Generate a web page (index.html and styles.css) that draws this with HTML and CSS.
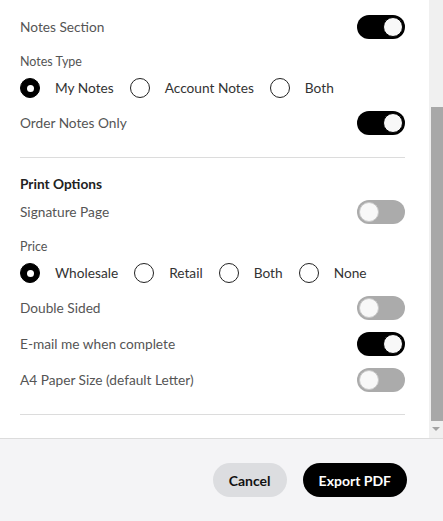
FILE: index.html
```html
<!DOCTYPE html>
<html lang="en">
<head>
    <meta charset="UTF-8">
    <meta name="viewport" content="width=device-width, initial-scale=1.0">
    <title>Export PDF</title>
    <link rel="stylesheet" href="styles.css">
</head>
<body>
    <div class="modal">
        <div class="modal-body">
            <div class="content">
                <div class="row">
                    <span class="row-label">Notes Section</span>
                    <span class="toggle on"><span class="knob"></span></span>
                </div>

                <div class="field-label">Notes Type</div>
                <div class="radio-group">
                    <span class="radio checked"></span><span class="radio-label">My Notes</span>
                    <span class="radio"></span><span class="radio-label">Account Notes</span>
                    <span class="radio"></span><span class="radio-label">Both</span>
                </div>

                <div class="row">
                    <span class="row-label">Order Notes Only</span>
                    <span class="toggle on"><span class="knob"></span></span>
                </div>

                <hr class="divider">

                <h3 class="section-title">Print Options</h3>
                <div class="row">
                    <span class="row-label">Signature Page</span>
                    <span class="toggle"><span class="knob"></span></span>
                </div>

                <div class="field-label">Price</div>
                <div class="radio-group">
                    <span class="radio checked"></span><span class="radio-label">Wholesale</span>
                    <span class="radio"></span><span class="radio-label">Retail</span>
                    <span class="radio"></span><span class="radio-label">Both</span>
                    <span class="radio"></span><span class="radio-label">None</span>
                </div>

                <div class="row">
                    <span class="row-label">Double Sided</span>
                    <span class="toggle"><span class="knob"></span></span>
                </div>
                <div class="row">
                    <span class="row-label">E-mail me when complete</span>
                    <span class="toggle on"><span class="knob"></span></span>
                </div>
                <div class="row">
                    <span class="row-label">A4 Paper Size (default Letter)</span>
                    <span class="toggle"><span class="knob"></span></span>
                </div>

                <hr class="divider">
            </div>
            <div class="scrollbar">
                <div class="track"><div class="thumb"></div></div>
                <div class="scroll-btn"><span class="arrow-down"></span></div>
            </div>
        </div>
        <div class="modal-footer">
            <button class="btn btn-cancel">Cancel</button>
            <button class="btn btn-primary">Export PDF</button>
        </div>
    </div>
</body>
</html>
```

FILE: styles.css
```css
* {
    margin: 0;
    padding: 0;
    box-sizing: border-box;
}

body {
    font-family: 'Segoe UI', Lato, sans-serif;
    background: #ffffff;
    color: #222;
    font-size: 13.7px;
}

.modal {
    display: flex;
    flex-direction: column;
    height: 521px;
}

.modal-body {
    display: flex;
    height: 439px;
    border-bottom: 1px solid #dcdcdc;
}

.content {
    flex: 1;
    padding: 9px 24px 0 20px;
}

.row {
    height: 36px;
    display: flex;
    justify-content: space-between;
    align-items: center;
}

.row-label {
    color: #555;
    padding-bottom: 2px;
}

.field-label {
    margin-top: 8px;
    margin-bottom: 5px;
    line-height: 18px;
    font-size: 12.5px;
    color: #555;
}

.radio-group {
    display: flex;
    align-items: center;
    height: 24px;
    margin-bottom: 5px;
}

.radio {
    width: 20px;
    height: 20px;
    border-radius: 50%;
    border: 1px solid #222;
    background: #fff;
    flex-shrink: 0;
}

.radio.checked {
    background: #000;
    border-color: #000;
    display: flex;
    justify-content: center;
    align-items: center;
}

.radio.checked::after {
    content: '';
    width: 7px;
    height: 7px;
    border-radius: 50%;
    background: #fff;
}

.radio-label {
    margin-left: 15px;
    margin-right: 16px;
    color: #333;
    padding-bottom: 2px;
}

.toggle {
    width: 48px;
    height: 24px;
    border-radius: 12px;
    background: #ababab;
    display: flex;
    align-items: center;
    padding: 2px;
}

.toggle .knob {
    width: 20px;
    height: 20px;
    border-radius: 50%;
    background: #f8f8f8;
    border: 1px solid #c8c8c8;
}

.toggle.on {
    background: #000;
    justify-content: flex-end;
}

.toggle.on .knob {
    border-color: #000;
}

.divider {
    border: none;
    border-top: 1px solid #dcdcdc;
    margin-top: 16px;
}

.section-title {
    margin-top: 16px;
    line-height: 20px;
    font-size: 13.7px;
    font-weight: 700;
    color: #222;
}

.scrollbar {
    width: 14px;
    display: flex;
    flex-direction: column;
    background: #f0f0f0;
}

.track {
    flex: 1;
    padding-top: 107px;
    padding-left: 2px;
}

.thumb {
    height: 314px;
    background: #a8a8a8;
}

.scroll-btn {
    height: 17px;
    display: flex;
    justify-content: center;
    padding-top: 6px;
}

.arrow-down {
    width: 0;
    height: 0;
    border-left: 4px solid transparent;
    border-right: 4px solid transparent;
    border-top: 4px solid #a3a3a3;
}

.modal-footer {
    flex: 1;
    background: #f4f4f6;
    display: flex;
    justify-content: flex-end;
    align-items: center;
    gap: 16px;
    padding: 0 36px 0 20px;
}

.btn {
    height: 34px;
    padding: 0 16px;
    border: none;
    border-radius: 17px;
    font-family: inherit;
    font-size: 14px;
    font-weight: 700;
    cursor: pointer;
}

.btn-cancel {
    background: #dcdde0;
    color: #111;
}

.btn-primary {
    background: #000;
    color: #fff;
}
```
